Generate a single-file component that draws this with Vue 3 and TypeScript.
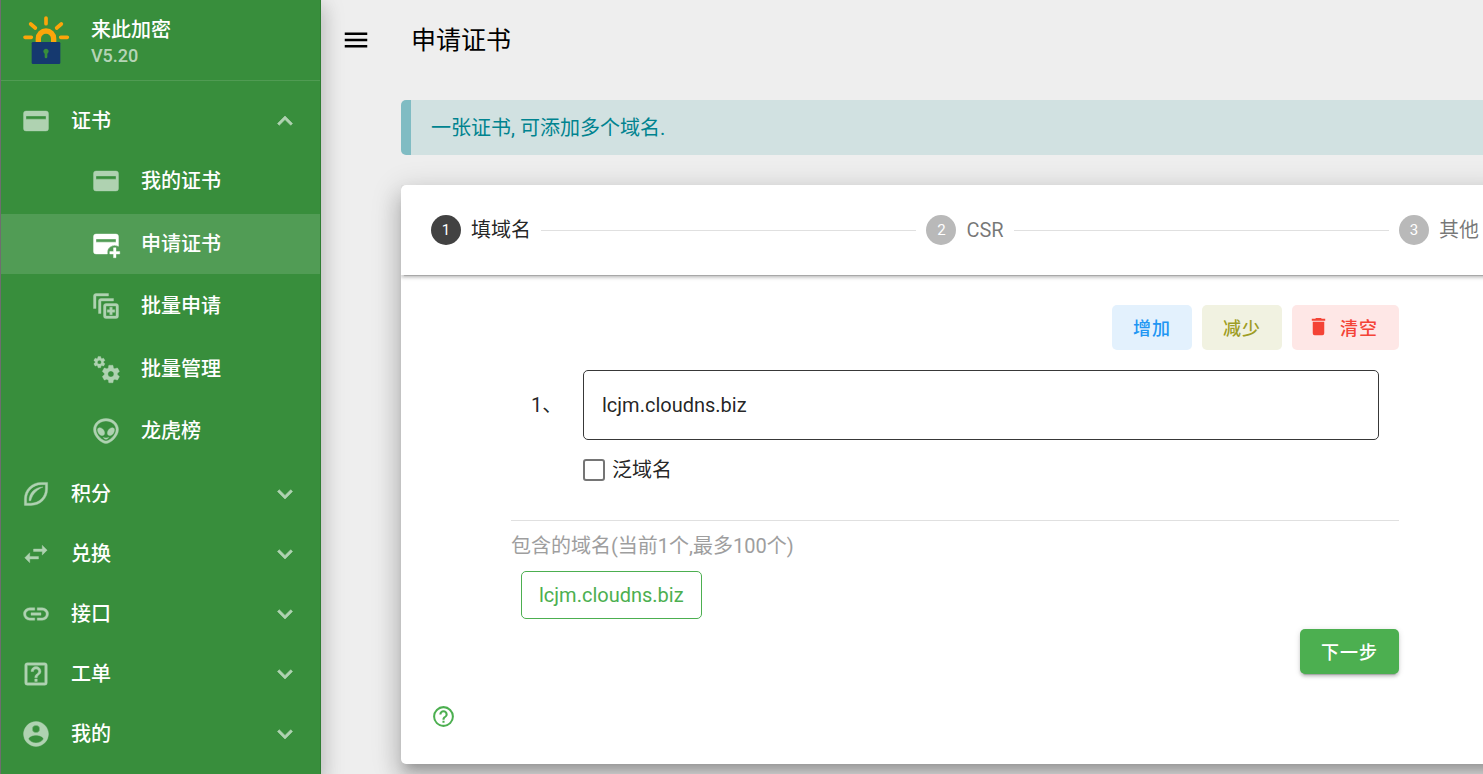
<script setup lang="ts">
import { computed, ref } from 'vue'

interface NavItem {
  label: string
  icon: string
}

const icons: Record<string, string> = {
  card: 'M4 4H20A2 2 0 0 1 22 6V18A2 2 0 0 1 20 20H4A2 2 0 0 1 2 18V6A2 2 0 0 1 4 4M4 8V10.5H20V8Z',
  cardPlus:
    'M4 4H20A2 2 0 0 1 22 6V13.8A6 6 0 0 0 13.1 20H4A2 2 0 0 1 2 18V6A2 2 0 0 1 4 4M4 8V10.5H20V8ZM18 15H20V18H23V20H20V23H18V20H15V18H18Z',
  stackPlus:
    'M18 8H8V18H6V8A2 2 0 0 1 8 6H18V8M14 2H4A2 2 0 0 0 2 4V14H4V4H14V2M12 10H20A2 2 0 0 1 22 12V20A2 2 0 0 1 20 22H12A2 2 0 0 1 10 20V12A2 2 0 0 1 12 10M12 12V20H20V12ZM15 13H17V15H19V17H17V19H15V17H13V15H15Z',
  cogs: 'M15.9,18.45C17.25,18.45 18.35,17.35 18.35,16C18.35,14.65 17.25,13.55 15.9,13.55C14.54,13.55 13.45,14.65 13.45,16C13.45,17.35 14.54,18.45 15.9,18.45M21.1,16.68L22.58,17.84C22.71,17.95 22.75,18.13 22.66,18.29L21.26,20.71C21.17,20.86 21,20.92 20.83,20.86L19.09,20.16C18.73,20.44 18.33,20.67 17.91,20.85L17.64,22.7C17.62,22.87 17.47,23 17.3,23H14.5C14.32,23 14.18,22.87 14.15,22.7L13.89,20.85C13.46,20.67 13.07,20.44 12.71,20.16L10.96,20.86C10.81,20.92 10.62,20.86 10.54,20.71L9.14,18.29C9.05,18.13 9.09,17.95 9.22,17.84L10.7,16.68L10.65,16L10.7,15.31L9.22,14.16C9.09,14.05 9.05,13.86 9.14,13.71L10.54,11.29C10.62,11.13 10.81,11.07 10.96,11.13L12.71,11.84C13.07,11.56 13.46,11.32 13.89,11.15L14.15,9.29C14.18,9.13 14.32,9 14.5,9H17.3C17.47,9 17.62,9.13 17.64,9.29L17.91,11.15C18.33,11.32 18.73,11.56 19.09,11.84L20.83,11.13C21,11.07 21.17,11.13 21.26,11.29L22.66,13.71C22.75,13.86 22.71,14.05 22.58,14.16L21.1,15.31L21.15,16L21.1,16.68M6.69,8.07C7.56,8.07 8.26,7.37 8.26,6.5C8.26,5.63 7.56,4.92 6.69,4.92A1.58,1.58 0 0,0 5.11,6.5C5.11,7.37 5.82,8.07 6.69,8.07M10.03,6.94L11,7.68C11.07,7.75 11.09,7.87 11.03,7.97L10.13,9.53C10.08,9.63 9.96,9.67 9.86,9.63L8.74,9.18L8,9.62L7.81,10.81C7.79,10.92 7.7,11 7.59,11H5.79C5.67,11 5.58,10.92 5.56,10.81L5.4,9.62L4.64,9.18L3.52,9.63C3.41,9.67 3.3,9.63 3.24,9.53L2.34,7.97C2.28,7.87 2.31,7.75 2.39,7.68L3.34,6.94L3.31,6.5L3.34,6.06L2.39,5.32C2.31,5.25 2.28,5.13 2.34,5.03L3.24,3.47C3.3,3.37 3.41,3.33 3.52,3.38L4.64,3.82L5.4,3.38L5.56,2.19C5.58,2.08 5.67,2 5.79,2H7.59C7.7,2 7.79,2.08 7.81,2.19L8,3.38L8.74,3.82L9.86,3.38C9.96,3.33 10.08,3.37 10.13,3.47L11.03,5.03C11.09,5.13 11.07,5.25 11,5.32L10.03,6.06L10.06,6.5L10.03,6.94Z',
  alien:
    'M12 2C17.5 2 22 5.9 22 10.8C22 16.5 15.5 22 12 22C8.5 22 2 16.5 2 10.8C2 5.9 6.5 2 12 2M12 4C7.6 4 4 7 4 10.8C4 15.4 9.5 20 12 20C14.5 20 20 15.4 20 10.8C20 7 16.4 4 12 4ZM6 9.6C7.2 8.9 9.2 9.7 10.2 11.4C11.2 13 11.1 14.8 10 15.4C8.8 16.1 7 15.3 6 13.7C5 12 4.9 10.2 6 9.6ZM18 9.6C16.8 8.9 14.8 9.7 13.8 11.4C12.8 13 12.9 14.8 14 15.4C15.2 16.1 17 15.3 18 13.7C19 12 19.1 10.2 18 9.6ZM9.8 17.2C11.2 17.7 12.8 17.7 14.2 17.2C13.6 18.2 12.9 18.6 12 18.6C11.1 18.6 10.4 18.2 9.8 17.2Z',
  leaf: 'M21.3 2.7V8C21.3 15.5 15.5 21.1 8 21.1H2.7V16C2.7 8.5 8.7 2.7 16.2 2.7ZM19.5 4.5H16.2C9.8 4.5 4.5 9.7 4.5 16V19.3H8C14.4 19.3 19.5 14.4 19.5 8ZM17.6 6.4C13.8 8 9.4 11.2 7.8 17.4H6.4C6.4 11 11 6.7 17.6 6.4Z',
  swap: 'M21,9L17,5V8H10V10H17V13M7,11L3,15L7,19V16H14V14H7V11Z',
  link: 'M3.9,12C3.9,10.29 5.29,8.9 7,8.9H11V7H7A5,5 0 0,0 2,12A5,5 0 0,0 7,17H11V15.1H7C5.29,15.1 3.9,13.71 3.9,12M8,13H16V11H8V13M17,7H13V8.9H17C18.71,8.9 20.1,10.29 20.1,12C20.1,13.71 18.71,15.1 17,15.1H13V17H17A5,5 0 0,0 22,12A5,5 0 0,0 17,7Z',
  helpBox:
    'M5 3H19A2 2 0 0 1 21 5V19A2 2 0 0 1 19 21H5A2 2 0 0 1 3 19V5A2 2 0 0 1 5 3M5 5V19H19V5ZM11 18H13V16H11ZM12 6A4 4 0 0 0 8 10H10A2 2 0 0 1 12 8A2 2 0 0 1 14 10C14 12 11 11.75 11 15H13C13 12.75 16 12.5 16 10A4 4 0 0 0 12 6Z',
  account:
    'M12,19.2C9.5,19.2 7.29,17.92 6,16C6.03,14 10,12.9 12,12.9C14,12.9 17.97,14 18,16C16.71,17.92 14.5,19.2 12,19.2M12,5A3,3 0 0,1 15,8A3,3 0 0,1 12,11A3,3 0 0,1 9,8A3,3 0 0,1 12,5M12,2A10,10 0 0,0 2,12A10,10 0 0,0 12,22A10,10 0 0,0 22,12C22,6.47 17.5,2 12,2Z',
  chevron: 'M7.41,8.58L12,13.17L16.59,8.58L18,10L12,16L6,10L7.41,8.58Z',
  menu: 'M3,6H21V8H3V6M3,11H21V13H3V11M3,16H21V18H3V16Z',
  trash: 'M19,4H15.5L14.5,3H9.5L8.5,4H5V6H19M6,19A2,2 0 0,0 8,21H16A2,2 0 0,0 18,19V7H6V19Z',
  helpCircle:
    'M11,18H13V16H11V18M12,2A10,10 0 0,0 2,12A10,10 0 0,0 12,22A10,10 0 0,0 22,12A10,10 0 0,0 12,2M12,20C7.59,20 4,16.41 4,12C4,7.59 7.59,4 12,4C16.41,4 20,7.59 20,12C20,16.41 16.41,20 12,20M12,6A4,4 0 0,0 8,10H10A2,2 0 0,1 12,8A2,2 0 0,1 14,10C14,12 11,11.75 11,15H13C13,12.75 16,12.5 16,10A4,4 0 0,0 12,6Z',
}

const certItems: NavItem[] = [
  { label: '我的证书', icon: 'card' },
  { label: '申请证书', icon: 'cardPlus' },
  { label: '批量申请', icon: 'stackPlus' },
  { label: '批量管理', icon: 'cogs' },
  { label: '龙虎榜', icon: 'alien' },
]

const groups: NavItem[] = [
  { label: '积分', icon: 'leaf' },
  { label: '兑换', icon: 'swap' },
  { label: '接口', icon: 'link' },
  { label: '工单', icon: 'helpBox' },
  { label: '我的', icon: 'account' },
]

const steps = ['填域名', 'CSR', '其他']

const certOpen = ref(true)
const activeItem = ref('申请证书')
const currentStep = ref(0)
const domains = ref([{ name: 'lcjm.cloudns.biz', wildcard: false }])
const included = computed(() => domains.value.map((d) => d.name).filter(Boolean))

function addDomain() {
  if (domains.value.length < 100) domains.value.push({ name: '', wildcard: false })
}
function removeDomain() {
  if (domains.value.length > 1) domains.value.pop()
}
function clearDomains() {
  domains.value = [{ name: '', wildcard: false }]
}
function nextStep() {
  currentStep.value = Math.min(currentStep.value + 1, steps.length - 1)
}
</script>

<template>
  <div class="app">
    <aside class="sidebar">
      <div class="brand">
        <svg class="logo" viewBox="66 45 144 150" aria-hidden="true">
          <g fill="none" stroke="#fca50a" stroke-width="11" stroke-linecap="round">
            <path d="M138 54V71M92 72L106 84M184 72L170 84M75 112H94M182 112H202" />
          </g>
          <path d="M107 128V116A31 31 0 0 1 169 116V128H153V116A15 15 0 0 0 123 116V128Z" fill="#fca50a" />
          <rect x="95" y="126" width="86" height="66" rx="4" fill="#15396f" />
          <path d="M134 161A8 8 0 1 1 142 161V171A4 4 0 0 1 134 171Z" fill="#388e3c" />
        </svg>
        <div class="brand-text">
          <div class="brand-name">来此加密</div>
          <div class="brand-version">V5.20</div>
        </div>
      </div>
      <nav class="nav">
        <button class="nav-row" type="button" :aria-expanded="certOpen" @click="certOpen = !certOpen">
          <svg class="icon" viewBox="0 0 24 24"><path fill-rule="evenodd" :d="icons.card" /></svg>
          <span class="nav-label">证书</span>
          <svg class="icon chevron" :class="{ flipped: certOpen }" viewBox="0 0 24 24"><path :d="icons.chevron" /></svg>
        </button>
        <div v-if="certOpen" class="sub-nav">
          <a
            v-for="item in certItems"
            :key="item.label"
            href="#"
            class="nav-row sub"
            :class="{ active: item.label === activeItem }"
            @click.prevent="activeItem = item.label"
          >
            <svg class="icon" viewBox="0 0 24 24"><path fill-rule="evenodd" :d="icons[item.icon]" /></svg>
            <span class="nav-label">{{ item.label }}</span>
          </a>
        </div>
        <button v-for="group in groups" :key="group.label" class="nav-row" type="button" aria-expanded="false">
          <svg class="icon" viewBox="0 0 24 24"><path fill-rule="evenodd" :d="icons[group.icon]" /></svg>
          <span class="nav-label">{{ group.label }}</span>
          <svg class="icon chevron" viewBox="0 0 24 24"><path :d="icons.chevron" /></svg>
        </button>
      </nav>
    </aside>

    <div class="page">
      <header class="topbar">
        <button class="menu-btn" type="button" aria-label="菜单">
          <svg class="menu-icon" viewBox="0 0 24 24"><path :d="icons.menu" /></svg>
        </button>
        <h1>申请证书</h1>
      </header>

      <main class="content">
        <div class="alert" role="status">一张证书, 可添加多个域名.</div>

        <section class="card">
          <div class="stepper">
            <template v-for="(step, i) in steps" :key="step">
              <hr v-if="i > 0" class="step-line" />
              <div class="step" :class="{ current: i === currentStep }">
                <span class="step-num">{{ i + 1 }}</span>
                <span>{{ step }}</span>
              </div>
            </template>
          </div>

          <div class="card-body">
            <div class="form">
              <div class="actions">
                <button class="btn blue" type="button" @click="addDomain">增加</button>
                <button class="btn olive" type="button" @click="removeDomain">减少</button>
                <button class="btn red" type="button" @click="clearDomains">
                  <svg class="trash" viewBox="0 0 24 24"><path :d="icons.trash" /></svg>清空
                </button>
              </div>

              <div v-for="(domain, i) in domains" :key="i" class="domain-row">
                <label class="domain-no" :for="'domain-' + i">{{ i + 1 }}、</label>
                <div class="domain-fields">
                  <input :id="'domain-' + i" v-model="domain.name" class="domain-input" type="text" />
                  <label class="check">
                    <input v-model="domain.wildcard" type="checkbox" />
                    <span>泛域名</span>
                  </label>
                </div>
              </div>

              <hr class="divider" />
              <p class="summary">包含的域名(当前{{ domains.length }}个,最多100个)</p>
              <div class="chips">
                <span v-for="name in included" :key="name" class="chip">{{ name }}</span>
              </div>
              <div class="actions">
                <button class="btn next" type="button" @click="nextStep">下一步</button>
              </div>
            </div>
            <button class="help" type="button" aria-label="帮助">
              <svg viewBox="0 0 24 24"><path :d="icons.helpCircle" /></svg>
            </button>
          </div>
        </section>
      </main>
    </div>
  </div>
</template>

<style>
body {
  margin: 0;
  background: #eee;
}
</style>

<style scoped>
* {
  box-sizing: border-box;
}
.app {
  display: flex;
  min-height: 100vh;
  background: #eee;
  color: rgba(0, 0, 0, 0.87);
  font: 400 20px/30px Roboto, 'Noto Sans CJK SC', sans-serif;
}
button,
input {
  font: inherit;
  color: inherit;
  margin: 0;
}
button {
  border: 0;
  padding: 0;
  background: none;
  cursor: pointer;
}
svg {
  display: block;
  fill: currentColor;
  flex: none;
}

.sidebar {
  position: relative;
  z-index: 1;
  flex: none;
  width: 321px;
  border-left: 1px solid #6e6e6e;
  border-right: 1px solid #2f7d33;
  background: #388e3c;
  color: #fff;
  box-shadow: 0 10px 18px 2px rgba(0, 0, 0, 0.14), 0 5px 22px 4px rgba(0, 0, 0, 0.1);
}
.brand {
  display: flex;
  align-items: center;
  gap: 21px;
  height: 81px;
  padding: 0 21px;
  border-bottom: 1px solid rgba(255, 255, 255, 0.12);
}
.logo {
  width: 48px;
  height: 50px;
}
.brand-text {
  padding-top: 4px;
  font-weight: 500;
  line-height: 25px;
}
.brand-name {
  padding-top: 1px;
}
.brand-version {
  font-size: 18px;
  color: rgba(255, 255, 255, 0.65);
}
.nav {
  padding: 10px 0;
}
.nav-row {
  display: flex;
  align-items: center;
  gap: 20px;
  width: 100%;
  height: 60px;
  padding: 0 20px;
  color: #fff;
  font-weight: 500;
  text-align: left;
  text-decoration: none;
}
.nav-row.sub {
  padding-left: 90px;
  margin-bottom: 2px;
}
.nav-row.sub:nth-child(odd) {
  margin-bottom: 3px;
}
.nav-row.active {
  background: rgba(255, 255, 255, 0.13);
}
.nav-label {
  flex: 1;
}
.icon {
  width: 30px;
  height: 30px;
  color: #afd2b1;
  stroke: currentColor;
  stroke-width: 0.3;
}
.icon.chevron {
  stroke-width: 0.5;
}
.active .icon {
  color: #fff;
}
.flipped {
  transform: rotate(180deg);
}

.page {
  flex: 1;
  min-width: 0;
  overflow: hidden;
}
.topbar {
  display: flex;
  align-items: center;
  gap: 40px;
  height: 80px;
  padding: 0 20px;
  color: #000;
}
.menu-icon {
  width: 30px;
  height: 30px;
}
h1 {
  margin: 0;
  padding-top: 1px;
  font-size: 25px;
  font-weight: 400;
}
.content {
  padding: 20px 0 10px 80px;
  margin-right: -26px;
}
.alert {
  height: 55px;
  padding: 13px 20px;
  border-left: 10px solid #80bcc3;
  border-radius: 5px;
  background: #d1e1e1;
  color: #00838f;
}
.card {
  margin-top: 30px;
  border-radius: 5px;
  background: #fff;
  box-shadow: 0 9px 10px -5px rgba(0, 0, 0, 0.2), 0 15px 21px 3px rgba(0, 0, 0, 0.14),
    0 6px 28px 5px rgba(0, 0, 0, 0.12);
}
.stepper {
  display: flex;
  align-items: center;
  gap: 10px;
  height: 90px;
  padding: 0 30px;
  border-radius: 5px 5px 0 0;
  box-shadow: 0 4px 1px -3px rgba(0, 0, 0, 0.2), 0 3px 3px 0 rgba(0, 0, 0, 0.14),
    0 1px 6px 0 rgba(0, 0, 0, 0.12);
  clip-path: inset(0 0 -10px 0);
}
.step {
  display: flex;
  align-items: center;
  gap: 10px;
  color: rgba(0, 0, 0, 0.54);
}
.step.current {
  color: rgba(0, 0, 0, 0.87);
}
.step-num {
  width: 30px;
  height: 30px;
  border-radius: 50%;
  background: #b9b9b9;
  color: #fff;
  font-size: 15px;
  text-align: center;
}
.current .step-num {
  background: #424242;
}
.step-line {
  flex: 1;
  margin: 0;
  border: 0;
  border-top: 1px solid #e0e0e0;
}
.card-body {
  padding: 30px 30px 35px;
}
.form {
  padding: 0 80px;
}
.actions {
  display: flex;
  justify-content: flex-end;
  gap: 10px;
}
.btn {
  display: flex;
  align-items: center;
  justify-content: center;
  min-width: 80px;
  height: 45px;
  padding: 2px 21px 0;
  border-radius: 5px;
  font-size: 18px;
  font-weight: 500;
  letter-spacing: 1px;
}
.blue {
  background: #e3f1fd;
  color: #2196f3;
}
.olive {
  background: #f1f2e1;
  color: #9e9d24;
}
.red {
  background: #fee7e6;
  color: #f44336;
}
.trash {
  width: 23px;
  height: 23px;
  margin: 0 10px 5px -6px;
}
.next {
  background: #4caf50;
  color: #fff;
  box-shadow: 0 4px 1px -3px rgba(0, 0, 0, 0.2), 0 3px 3px 0 rgba(0, 0, 0, 0.14),
    0 1px 6px 0 rgba(0, 0, 0, 0.12);
}
.domain-row {
  display: flex;
  margin-top: 20px;
  padding: 0 20px;
}
.domain-no {
  width: 52px;
  line-height: 70px;
}
.domain-fields {
  flex: 1;
}
.domain-input {
  display: block;
  width: 100%;
  height: 70px;
  padding: 0 18px;
  border: 1px solid #383838;
  border-radius: 5px;
  background: #fff;
}
.check {
  display: flex;
  align-items: center;
  gap: 7px;
  height: 30px;
  margin-top: 15px;
}
.check input {
  appearance: none;
  width: 22px;
  height: 22px;
  border: 2px solid #757575;
  border-radius: 3px;
}
.check input:checked {
  background: #757575;
}
.divider {
  margin: 35px 0 10px;
  border: 0;
  border-top: 1px solid #e0e0e0;
}
.summary {
  margin: 0;
  color: #9e9e9e;
}
.chips {
  display: flex;
  flex-wrap: wrap;
  gap: 10px;
  padding: 10px;
}
.chip {
  height: 48px;
  padding: 0 17px;
  border: 1px solid #4caf50;
  border-radius: 5px;
  color: #4caf50;
  line-height: 46px;
}
.help {
  display: block;
  margin-top: 30px;
  color: #4caf50;
}
.help svg {
  width: 25px;
  height: 25px;
}
</style>
